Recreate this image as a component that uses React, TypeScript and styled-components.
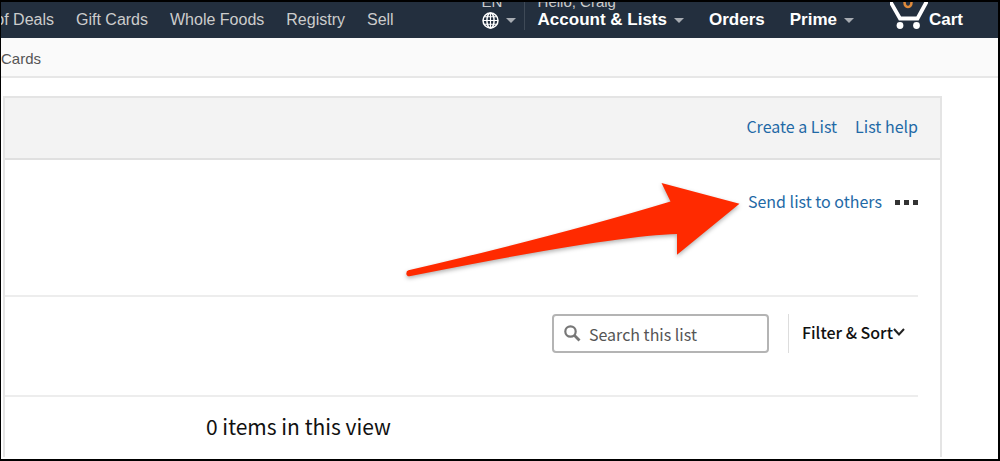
import React from 'react';
import styled, { createGlobalStyle } from 'styled-components';

const GlobalStyle = createGlobalStyle`
  *, *::before, *::after { box-sizing: border-box; }
  body { margin: 0; background: #fff; }
  a { color: inherit; text-decoration: none; }
  button, input { font: inherit; color: inherit; margin: 0; }
`;

const Page = styled.div`
  min-height: 100vh;
  border: 2px solid #000;
  border-left-width: 1px;
  background: #fff;
  color: #111;
  font-family: 'Noto Sans CJK SC', 'Noto Sans', sans-serif;
  font-size: 16px;
  line-height: 24px;
  overflow: hidden;
`;

const Header = styled.header`
  display: flex;
  align-items: flex-end;
  justify-content: space-between;
  height: 36px;
  padding: 0 35px 8px 0;
  overflow: hidden;
  background: #232f3e;
  color: #fff;
  font-family: 'Liberation Sans', Arial, sans-serif;
  line-height: 20px;
`;

const NavLinks = styled.nav`
  display: flex;
  gap: 22px;
  color: #ccc;
  font-size: 16px;
  white-space: nowrap;
`;

const CutLink = styled.a`
  display: flex;
  justify-content: flex-end;
  width: 53px;
  overflow: hidden;
`;

const Tools = styled.div`
  display: flex;
  align-items: flex-end;
  font-size: 17px;
  font-weight: 700;
  white-space: nowrap;
`;

const Tool = styled.a<{ $gap: number }>`
  display: flex;
  flex-direction: column;
  margin-left: ${(p) => p.$gap}px;
`;

const ToolHint = styled.span`
  color: #ccc;
  font-size: 15px;
  font-weight: 400;
  line-height: 16px;
`;

const ToolLabel = styled.span`
  display: flex;
  align-items: center;
  height: 20px;
  gap: 7px;
`;

const Caret = styled.span`
  border: 5px solid transparent;
  border-top-color: #a7acb2;
  border-bottom: 0;
`;

const ToolDivider = styled.span`
  width: 1px;
  height: 32px;
  margin-left: 8px;
  background: #3f4a57;
`;

const CartLink = styled.a`
  display: flex;
  align-items: flex-end;
  gap: 1px;
  margin-left: 36px;
`;

const SubNav = styled.nav`
  height: 40px;
  border-bottom: 2px solid #e7e7e7;
  background: #fafafa;
  color: #555;
  font-family: 'Liberation Sans', Arial, sans-serif;
  font-size: 15px;
  line-height: 42px;
`;

const Panel = styled.main`
  margin: 18px 56px 0 2px;
  border: 2px solid #e4e4e4;
  border-bottom: 0;
`;

const PanelHead = styled.div`
  display: flex;
  align-items: center;
  justify-content: flex-end;
  gap: 18px;
  height: 62px;
  padding: 0 22px 4px 0;
  border-bottom: 2px solid #e0e0e0;
  background: #f3f3f3;
`;

const BlueLink = styled.a`
  color: #1f69a6;
`;

const Section = styled.div<{ $height: number }>`
  position: relative;
  display: flex;
  justify-content: flex-end;
  height: ${(p) => p.$height}px;
  margin-right: 22px;
  border-bottom: 2px solid #ededed;
`;

const SendGroup = styled.div`
  display: flex;
  align-items: center;
  gap: 13px;
  height: 24px;
  margin-top: 29px;
`;

const MoreButton = styled.button`
  display: flex;
  gap: 4px;
  padding: 2px 0 0;
  border: 0;
  background: none;
`;

const Dot = styled.span`
  width: 5px;
  height: 5px;
  background: #333;
`;

const Arrow = styled.svg`
  position: absolute;
  right: 172px;
  top: 17px;
  overflow: visible;
  filter: drop-shadow(0 2px 2px rgba(0, 0, 0, 0.3));
`;

const SearchBox = styled.label`
  display: flex;
  align-items: center;
  gap: 8px;
  width: 217px;
  height: 39px;
  margin-top: 17px;
  padding: 0 10px;
  border: 2px solid #b4b4b4;
  border-radius: 4px;
  color: #777;
`;

const SearchInput = styled.input`
  flex: 1;
  min-width: 0;
  padding: 0;
  border: 0;
  outline: 0;
  background: none;
  &::placeholder { color: #555; opacity: 1; }
`;

const FilterButton = styled.button`
  display: flex;
  align-items: center;
  height: 39px;
  margin: 17px 0 0 19px;
  padding: 0 13px 4px;
  border: 0;
  border-left: 1px solid #ddd;
  background: none;
  color: #111;
  font-weight: 500;
`;

const EmptyNote = styled.p`
  margin: 0;
  padding: 14px 0 16px 201px;
  font-size: 21px;
  line-height: 30px;
`;

export default function App() {
  return (
    <>
      <GlobalStyle />
      <Page>
        <Header>
          <NavLinks aria-label="Store">
            <CutLink href="#deals">of&nbsp;Deals</CutLink>
            <a href="#gift-cards">Gift Cards</a>
            <a href="#whole-foods">Whole Foods</a>
            <a href="#registry">Registry</a>
            <a href="#sell">Sell</a>
          </NavLinks>
          <Tools>
            <Tool href="#language" $gap={0}>
              <ToolHint>EN</ToolHint>
              <ToolLabel>
                <svg width="17" height="17" viewBox="0 0 17 17" fill="none" stroke="#fff" strokeWidth="1.5" aria-hidden="true">
                  <circle cx="8.5" cy="8.5" r="7.5" />
                  <ellipse cx="8.5" cy="8.5" rx="3.6" ry="7.5" />
                  <path d="M8.500 1v15M1 8.500h15M2.500 4.700h12M2.500 12.300h12" strokeWidth="1.100" />
                </svg>
                <Caret />
              </ToolLabel>
            </Tool>
            <ToolDivider />
            <Tool href="#account" $gap={13}>
              <ToolHint>Hello, Craig</ToolHint>
              <ToolLabel>
                Account &amp; Lists
                <Caret />
              </ToolLabel>
            </Tool>
            <Tool href="#orders" $gap={25}>
              <ToolLabel>Orders</ToolLabel>
            </Tool>
            <Tool href="#prime" $gap={25}>
              <ToolLabel>
                Prime
                <Caret />
              </ToolLabel>
            </Tool>
            <CartLink href="#cart">
              <svg width="38" height="30" viewBox="0 0 38 30" fill="none" aria-hidden="true">
                <path d="M0 1L10 18.500H27.500L37 1" stroke="#fff" strokeWidth="3.800" />
                <path d="M14.500 2C14.500 8.500 21.500 8.500 21.500 2" stroke="#e08b3c" strokeWidth="2.500" />
                <circle cx="10" cy="25.500" r="3.400" fill="#fff" />
                <circle cx="26.500" cy="25.500" r="3.400" fill="#fff" />
              </svg>
              <span>Cart</span>
            </CartLink>
          </Tools>
        </Header>
        <SubNav aria-label="Section">
          <a href="#cards">Cards</a>
        </SubNav>
        <Panel>
          <PanelHead>
            <BlueLink href="#create">Create a List</BlueLink>
            <BlueLink href="#help">List help</BlueLink>
          </PanelHead>
          <Section $height={137}>
            <SendGroup>
              <BlueLink href="#send">Send list to others</BlueLink>
              <MoreButton type="button" aria-label="More options">
                <Dot />
                <Dot />
                <Dot />
              </MoreButton>
            </SendGroup>
            <Arrow width="340" height="106" viewBox="406 178 340 106" aria-hidden="true">
              <path
                d="M408.500 271.300Q560 236 670.500 202.500L661.500 184L739.500 204.700L677 255.700L677 235Q610 237 409.500 277.300Q406.500 277.500 406.300 274.500Q406.300 271.800 408.500 271.300Z"
                fill="#ff2a00"
              />
            </Arrow>
          </Section>
          <Section $height={100}>
            <SearchBox>
              <svg width="17" height="17" viewBox="0 0 17 17" fill="none" stroke="#777" aria-hidden="true">
                <circle cx="6.500" cy="6.500" r="5.200" strokeWidth="2.200" />
                <path d="M10.300 10.300L15.500 15.500" strokeWidth="2.800" />
              </svg>
              <SearchInput type="search" placeholder="Search this list" aria-label="Search this list" />
            </SearchBox>
            <FilterButton type="button">
              Filter &amp; Sort
              <svg width="12" height="10" viewBox="0 0 12 10" fill="none" stroke="#222" strokeWidth="2" aria-hidden="true">
                <path d="M1 2L6 7.500L11 2" />
              </svg>
            </FilterButton>
          </Section>
          <EmptyNote>0 items in this view</EmptyNote>
        </Panel>
      </Page>
    </>
  );
}
